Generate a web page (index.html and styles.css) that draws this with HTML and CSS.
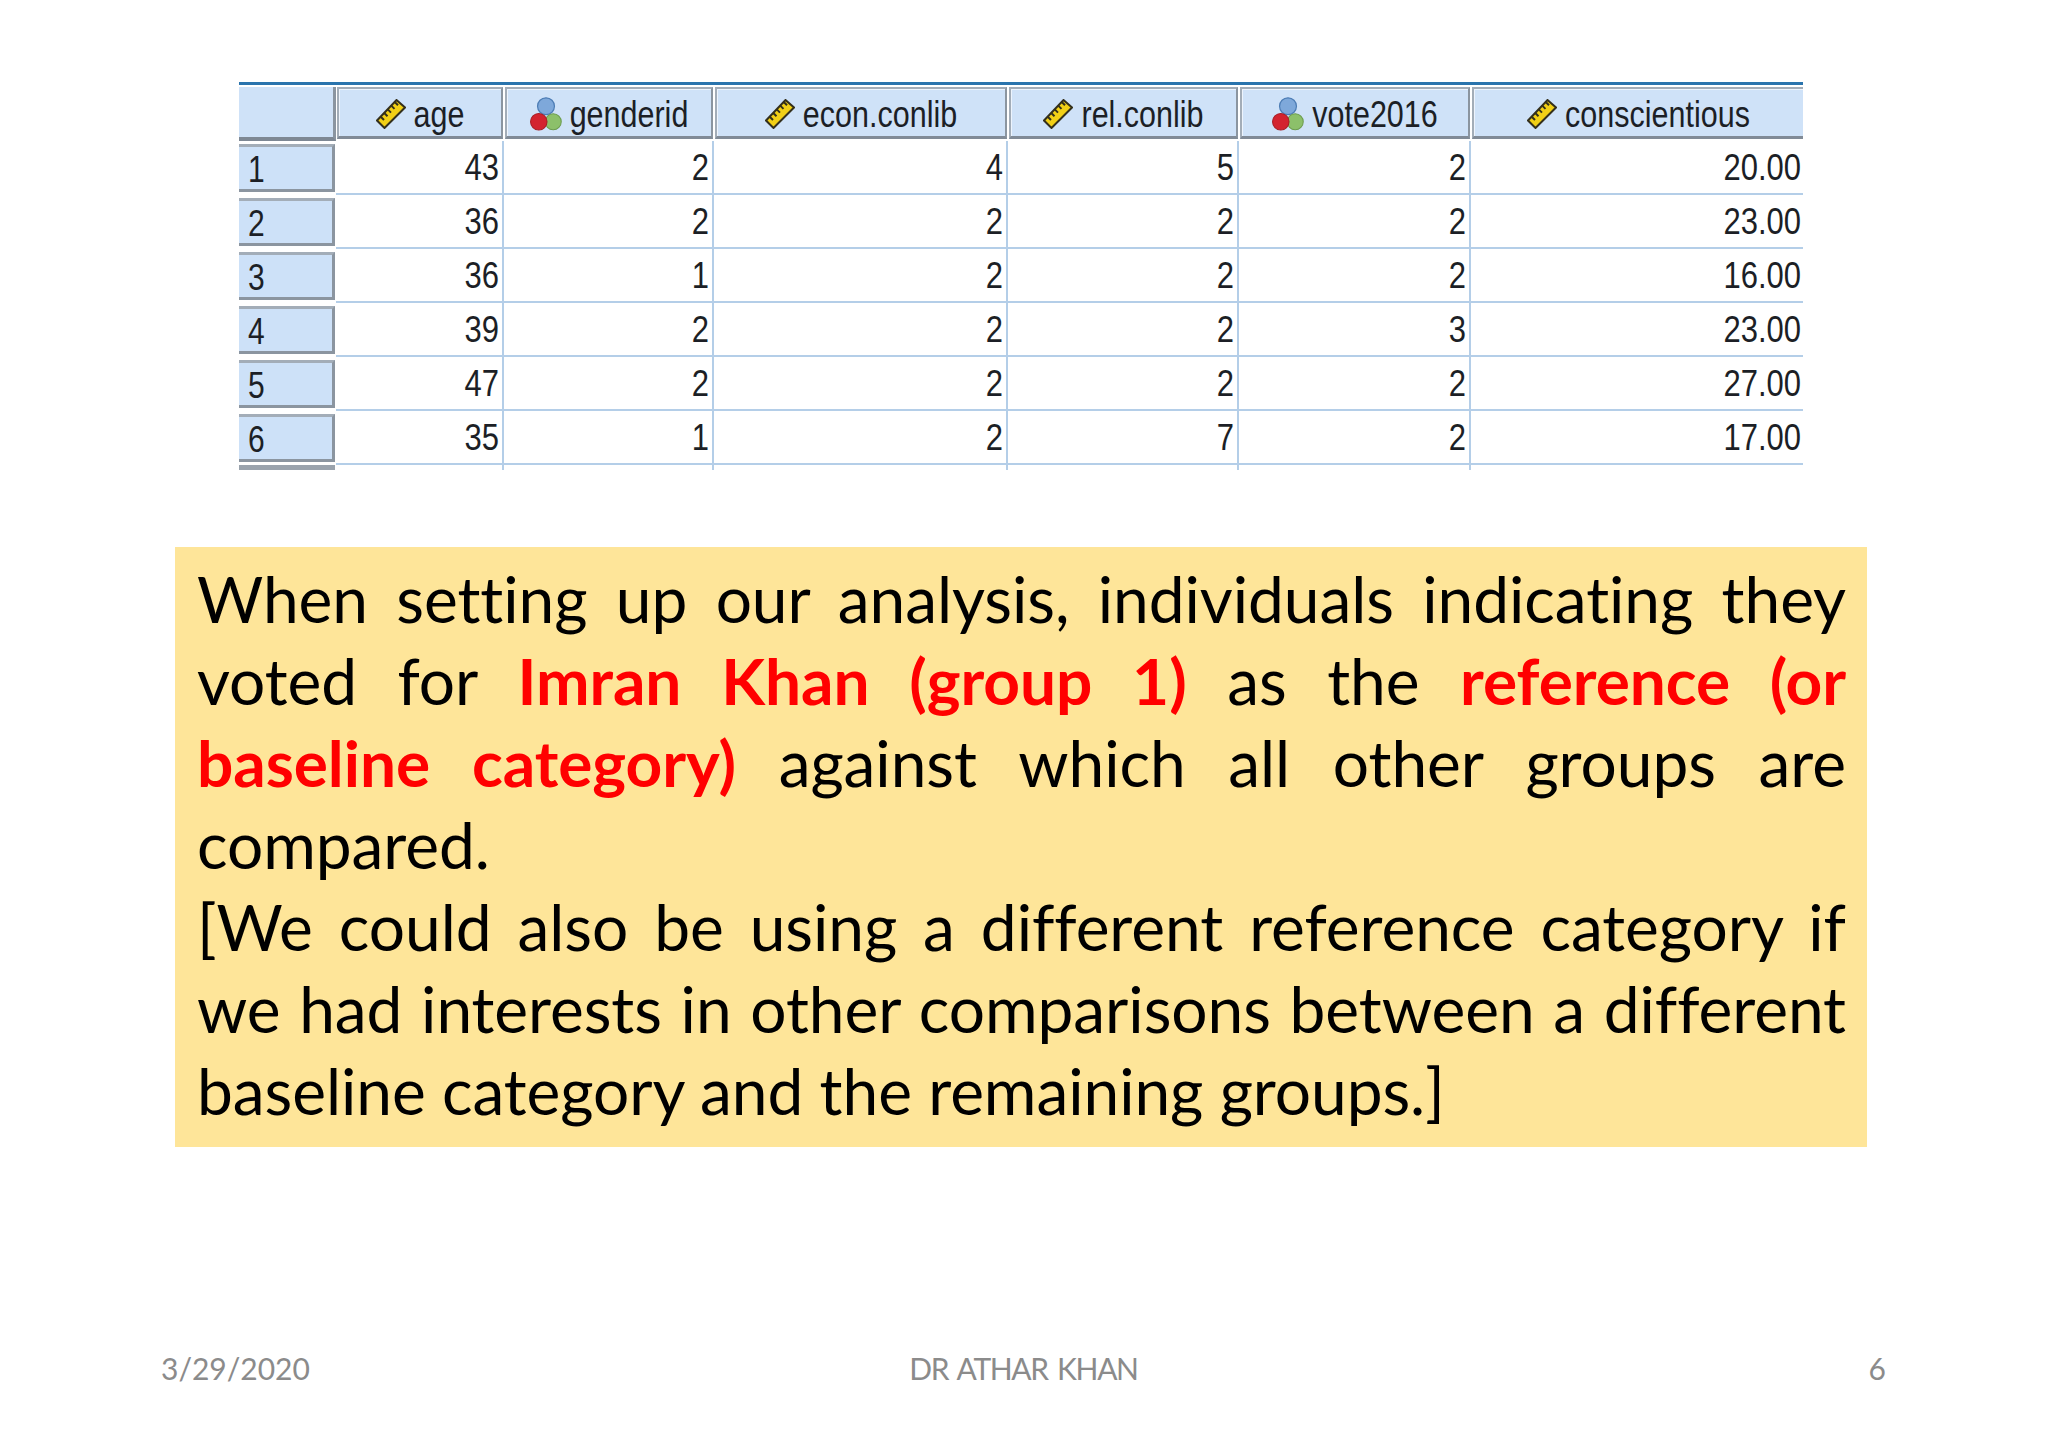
FILE: index.html
```html
<!DOCTYPE html>
<html lang="en">
<head>
<meta charset="utf-8">
<title>Slide 6</title>
<link rel="stylesheet" href="styles.css">
</head>
<body>
<svg class="defs" width="0" height="0" aria-hidden="true">
  <defs>
    <symbol id="ruler" viewBox="0 0 30 30">
      <polygon points="1,21.500 20.500,1 29,8.500 8.500,29" fill="#f2d016" stroke="#34301c" stroke-width="2"/>
      <path d="M4.500,17.500l3.500,3.500M8,13.800l3.500,3.500M11.500,10.100l3.500,3.500M15,6.400l3.500,3.500M18.500,2.700l3.500,3.500" stroke="#34301c" stroke-width="2" fill="none"/>
    </symbol>
    <symbol id="nominal" viewBox="0 0 30 33">
      <circle cx="15" cy="9" r="8.200" fill="#7ea8da" stroke="#4d7db5" stroke-width="1.200"/>
      <circle cx="22" cy="24" r="7.800" fill="#8cc06a" stroke="#6c9c4e" stroke-width="1"/>
      <circle cx="8" cy="24" r="8" fill="#d3232f" stroke="#a81c24" stroke-width="1"/>
    </symbol>
  </defs>
</svg>
<main class="slide">
  <section class="sheet">
    <div class="corner"></div>
    <div class="head"><svg class="ic"><use href="#ruler"/></svg><span class="tall">age</span></div>
    <div class="head"><svg class="ic ic-nom"><use href="#nominal"/></svg><span class="tall">genderid</span></div>
    <div class="head"><svg class="ic"><use href="#ruler"/></svg><span class="tall">econ.conlib</span></div>
    <div class="head"><svg class="ic"><use href="#ruler"/></svg><span class="tall">rel.conlib</span></div>
    <div class="head"><svg class="ic ic-nom"><use href="#nominal"/></svg><span class="tall">vote2016</span></div>
    <div class="head head-last"><svg class="ic"><use href="#ruler"/></svg><span class="tall">conscientious</span></div>

    <div class="rowhead"><span class="rowlabel"><span class="tall">1</span></span></div>
    <div class="cell"><span class="tall">43</span></div><div class="cell"><span class="tall">2</span></div><div class="cell"><span class="tall">4</span></div><div class="cell"><span class="tall">5</span></div><div class="cell"><span class="tall">2</span></div><div class="cell cell-last"><span class="tall">20.00</span></div>

    <div class="rowhead"><span class="rowlabel"><span class="tall">2</span></span></div>
    <div class="cell"><span class="tall">36</span></div><div class="cell"><span class="tall">2</span></div><div class="cell"><span class="tall">2</span></div><div class="cell"><span class="tall">2</span></div><div class="cell"><span class="tall">2</span></div><div class="cell cell-last"><span class="tall">23.00</span></div>

    <div class="rowhead"><span class="rowlabel"><span class="tall">3</span></span></div>
    <div class="cell"><span class="tall">36</span></div><div class="cell"><span class="tall">1</span></div><div class="cell"><span class="tall">2</span></div><div class="cell"><span class="tall">2</span></div><div class="cell"><span class="tall">2</span></div><div class="cell cell-last"><span class="tall">16.00</span></div>

    <div class="rowhead"><span class="rowlabel"><span class="tall">4</span></span></div>
    <div class="cell"><span class="tall">39</span></div><div class="cell"><span class="tall">2</span></div><div class="cell"><span class="tall">2</span></div><div class="cell"><span class="tall">2</span></div><div class="cell"><span class="tall">3</span></div><div class="cell cell-last"><span class="tall">23.00</span></div>

    <div class="rowhead"><span class="rowlabel"><span class="tall">5</span></span></div>
    <div class="cell"><span class="tall">47</span></div><div class="cell"><span class="tall">2</span></div><div class="cell"><span class="tall">2</span></div><div class="cell"><span class="tall">2</span></div><div class="cell"><span class="tall">2</span></div><div class="cell cell-last"><span class="tall">27.00</span></div>

    <div class="rowhead"><span class="rowlabel"><span class="tall">6</span></span></div>
    <div class="cell"><span class="tall">35</span></div><div class="cell"><span class="tall">1</span></div><div class="cell"><span class="tall">2</span></div><div class="cell"><span class="tall">7</span></div><div class="cell"><span class="tall">2</span></div><div class="cell cell-last"><span class="tall">17.00</span></div>

    <div class="stub-head"></div>
    <div class="stub"></div><div class="stub"></div><div class="stub"></div><div class="stub"></div><div class="stub"></div><div class="stub stub-last"></div>
  </section>

  <section class="note">
    <span class="line just">When setting up our analysis, individuals indicating they</span>
    <span class="line just">voted for <b class="em">Imran Khan (group 1)</b> as the <b class="em">reference (or</b></span>
    <span class="line just"><b class="em">baseline category)</b> against which all other groups are</span>
    <span class="line">compared.</span>
    <span class="line just">[We could also be using a different reference category if</span>
    <span class="line just">we had interests in other comparisons between a different</span>
    <span class="line">baseline category and the remaining groups.]</span>
  </section>

  <footer class="foot">
    <span class="foot-side">3/29/2020</span>
    <span class="foot-mid">DR ATHAR KHAN</span>
    <span class="foot-side foot-right">6</span>
  </footer>
</main>
</body>
</html>
```

FILE: styles.css
```css
html, body {
  margin: 0;
  padding: 0;
  background: #ffffff;
}

.defs {
  position: absolute;
}

.slide {
  box-sizing: border-box;
  width: 2048px;
  height: 1434px;
  padding-top: 82px;
  display: flex;
  flex-direction: column;
  font-family: "Lato", "Liberation Sans", sans-serif;
  color: #000;
}

/* data grid */
.sheet {
  margin-left: 239px;
  width: 1564px;
  display: grid;
  grid-template-columns: 97px 168px 210px 294px 231px 232px 332px;
  grid-template-rows: 56px repeat(6, 54px) 5px;
  border-top: 3px solid #2a74ad;
  font-family: "Liberation Sans", Arial, sans-serif;
  color: #1c1f26;
  box-sizing: content-box;
}

.tall {
  display: inline-block;
  transform: scaleY(1.2);
}

.corner {
  background: #cfe2f8;
  margin-top: 2px;
  border-right: 3px solid #8b95a0;
  border-bottom: 4px solid #7e8894;
  box-sizing: border-box;
}

.head {
  margin: 2px 1px 2px 1px;
  padding-top: 3px;
  background: #cfe2f8;
  border: 2px solid #a3adb8;
  border-right-color: #8b95a0;
  border-bottom: 3px solid #818b97;
  box-shadow: inset 1px 1px 0 #edf4fd;
  display: flex;
  align-items: center;
  justify-content: center;
  gap: 8px;
  font-size: 30.5px;
  line-height: 1;
  box-sizing: border-box;
}

.head-last {
  margin-right: 0;
  border-right: 0;
}

.ic {
  width: 30px;
  height: 30px;
  flex: none;
}

.ic-nom {
  width: 32px;
  height: 34px;
}

.rowhead {
  display: flex;
  align-items: stretch;
  padding: 3px 1px 3px 0;
}

.rowlabel {
  flex: 1;
  background: #cde1f8;
  border-top: 3px solid #a3adb8;
  border-right: 3px solid #8b95a0;
  border-bottom: 3px solid #8b95a0;
  display: flex;
  align-items: center;
  padding: 3px 0 0 9px;
  font-size: 30px;
  line-height: 1;
}

.cell {
  background: #fff;
  border-right: 2px solid #b4cee8;
  border-bottom: 2px solid #b4cee8;
  display: flex;
  align-items: center;
  justify-content: flex-end;
  padding-right: 3px;
  font-size: 31px;
  line-height: 1;
  box-sizing: border-box;
}

.cell-last {
  border-right: 0;
  padding-right: 2px;
}

.stub-head {
  background: #9aa3ad;
  margin-right: 1px;
}

.stub {
  border-right: 2px solid #b4cee8;
  box-sizing: border-box;
}

.stub-last {
  border-right: 0;
}

/* yellow note */
.note {
  margin: 77px 0 0 175px;
  width: 1692px;
  box-sizing: border-box;
  padding: 11px 21px 15px 22px;
  background: #fee599;
  font-size: 64px;
  line-height: 82px;
  letter-spacing: -0.06px;
  font-variant-ligatures: none;
}

.line {
  display: block;
  white-space: nowrap;
}

.just {
  white-space: normal;
  text-align: justify;
  text-align-last: justify;
}

.em {
  color: #ff0000;
  font-weight: 700;
}

/* footer */
.foot {
  margin-top: auto;
  margin-bottom: 46px;
  padding: 0 162px 0 161px;
  display: grid;
  grid-template-columns: 1fr auto 1fr;
  font-size: 30px;
  line-height: 40px;
  color: #8b8b8b;
}

.foot-mid {
  letter-spacing: -1.35px;
  word-spacing: 3px;
}

.foot-right {
  text-align: right;
}
```
